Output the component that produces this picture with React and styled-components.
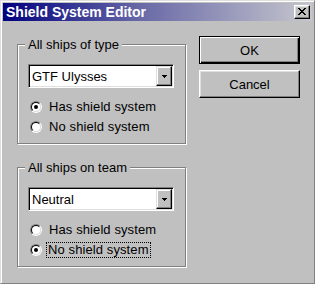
import React from 'react';
import styled, { createGlobalStyle } from 'styled-components';

const Global = createGlobalStyle`
  html, body { margin: 0; padding: 0; background: #c0c0c0; }
  body { font-family: "Liberation Sans", Arial, sans-serif; }
  * { box-sizing: border-box; }
`;

const Window = styled.div`
  width: 315px;
  height: 284px;
  background: #c0c0c0;
  border: 1px solid;
  border-color: #dfdfdf #808080 #808080 #dfdfdf;
  box-shadow: inset 1px 1px 0 #fff;
  padding: 2px;
  display: flex;
  flex-direction: column;
`;

const TitleBar = styled.div`
  height: 18px;
  flex: none;
  display: flex;
  align-items: center;
  justify-content: space-between;
  padding: 0 2px 0 3px;
  background: linear-gradient(90deg, #000080 0%, #6a6aa8 45%, #c6c6ce 100%);
  color: #fff;
  font-weight: bold;
  font-size: 14px;
  white-space: nowrap;
`;

const CloseButton = styled.div`
  width: 16px;
  height: 14px;
  background: #c0c0c0;
  border: 1px solid;
  border-color: #fff #000 #000 #fff;
  box-shadow: inset -1px -1px 0 #808080, inset 1px 1px 0 #dfdfdf;
  display: flex;
  align-items: center;
  justify-content: center;
  padding: 0 1px 1px 0;
`;

const Body = styled.div`
  flex: 1;
  display: flex;
  gap: 13px;
  padding-left: 14px;
`;

const LeftColumn = styled.div`
  display: flex;
  flex-direction: column;
  gap: 23px;
  padding-top: 23px;
`;

const Group = styled.div`
  position: relative;
  width: 169px;
  height: 100px;
  border: 1px solid #808080;
  box-shadow: inset 1px 1px 0 #fff, 1px 1px 0 #fff;
  padding: 19px 0 0 10px;
  display: flex;
  flex-direction: column;
`;

const Caption = styled.span`
  position: absolute;
  top: -8px;
  left: 7px;
  padding: 0 3px;
  background: #c0c0c0;
  font-size: 13px;
  line-height: 15px;
  color: #000;
  white-space: nowrap;
`;

const Combo = styled.div`
  width: 146px;
  height: 24px;
  flex: none;
  display: flex;
  background: #fff;
  border: 1px solid;
  border-color: #808080 #fff #fff #808080;
  box-shadow: inset 1px 1px 0 #000, inset -1px -1px 0 #dfdfdf;
  padding: 1px;
  margin-bottom: 9px;
`;

const ComboText = styled.div`
  flex: 1;
  display: flex;
  align-items: center;
  padding-left: 2px;
  font-size: 13px;
  color: #000;
  white-space: nowrap;
`;

const DropButton = styled.div`
  width: 16px;
  flex: none;
  background: #c0c0c0;
  border: 1px solid;
  border-color: #dfdfdf #000 #000 #dfdfdf;
  box-shadow: inset -1px -1px 0 #808080, inset 1px 1px 0 #fff;
  display: flex;
  align-items: center;
  justify-content: center;
`;

const RadioRow = styled.div`
  height: 20px;
  display: flex;
  align-items: center;
  gap: 6px;
  padding-left: 2px;
  font-size: 13px;
  color: #000;
  white-space: nowrap;
`;

const RadioOuter = styled.span`
  width: 12px;
  height: 12px;
  flex: none;
  border-radius: 50%;
  border: 1px solid;
  border-color: #808080 #fff #fff #808080;
  display: flex;
  align-items: center;
  justify-content: center;
`;

const RadioInner = styled.span`
  width: 10px;
  height: 10px;
  border-radius: 50%;
  border: 1px solid;
  border-color: #000 #dfdfdf #dfdfdf #000;
  background: #fff;
  display: flex;
  align-items: center;
  justify-content: center;
  &::after {
    content: '';
    width: 4px;
    height: 4px;
    border-radius: 50%;
    background: ${(p) => (p.$checked ? '#000' : 'transparent')};
  }
`;

const RadioLabel = styled.span`
  padding: 0 1px;
  line-height: 14px;
  letter-spacing: 0.1px;
  outline: ${(p) => (p.$focused ? '1px dotted #000' : 'none')};
  margin-left: ${(p) => (p.$focused ? '-1px' : '0')};
`;

const RightColumn = styled.div`
  display: flex;
  flex-direction: column;
  gap: 6px;
  padding-top: 15px;
`;

const Button = styled.div`
  width: 101px;
  height: 28px;
  display: flex;
  align-items: center;
  justify-content: center;
  font-size: 13px;
  color: #000;
  background: #c0c0c0;
  border: 1px solid;
  border-color: ${(p) => (p.$default ? '#000' : '#fff #000 #000 #fff')};
  box-shadow: ${(p) =>
    p.$default
      ? 'inset 1px 1px 0 #fff, inset -1px -1px 0 #000, inset -2px -2px 0 #808080'
      : 'inset -1px -1px 0 #808080, inset 1px 1px 0 #dfdfdf'};
`;

const CloseGlyph = () => (
  <svg width="8" height="7" viewBox="0 0 8 7" shapeRendering="crispEdges">
    <path
      fill="#000"
      d="M0 0h2v1H0zM6 0h2v1H6zM1 1h2v1H1zM5 1h2v1H5zM2 2h4v1H2zM3 3h2v1H3zM2 4h4v1H2zM1 5h2v1H1zM5 5h2v1H5zM0 6h2v1H0zM6 6h2v1H6z"
    />
  </svg>
);

const DownArrow = () => (
  <svg width="5" height="3" viewBox="0 0 5 3" shapeRendering="crispEdges">
    <path fill="#000" d="M0 0h5v1H0zM1 1h3v1H1zM2 2h1v1H2z" />
  </svg>
);

const Radio = ({ checked, focused, children }) => (
  <RadioRow>
    <RadioOuter>
      <RadioInner $checked={checked} />
    </RadioOuter>
    <RadioLabel $focused={focused}>{children}</RadioLabel>
  </RadioRow>
);

const ShipGroup = ({ caption, value, hasShield, focused }) => (
  <Group>
    <Caption>{caption}</Caption>
    <Combo>
      <ComboText>{value}</ComboText>
      <DropButton>
        <DownArrow />
      </DropButton>
    </Combo>
    <Radio checked={hasShield}>Has shield system</Radio>
    <Radio checked={!hasShield} focused={focused}>
      No shield system
    </Radio>
  </Group>
);

export default function App() {
  return (
    <>
      <Global />
      <Window>
        <TitleBar>
          <span>Shield System Editor</span>
          <CloseButton>
            <CloseGlyph />
          </CloseButton>
        </TitleBar>
        <Body>
          <LeftColumn>
            <ShipGroup caption="All ships of type" value="GTF Ulysses" hasShield />
            <ShipGroup caption="All ships on team" value="Neutral" hasShield={false} focused />
          </LeftColumn>
          <RightColumn>
            <Button $default>OK</Button>
            <Button>Cancel</Button>
          </RightColumn>
        </Body>
      </Window>
    </>
  );
}
